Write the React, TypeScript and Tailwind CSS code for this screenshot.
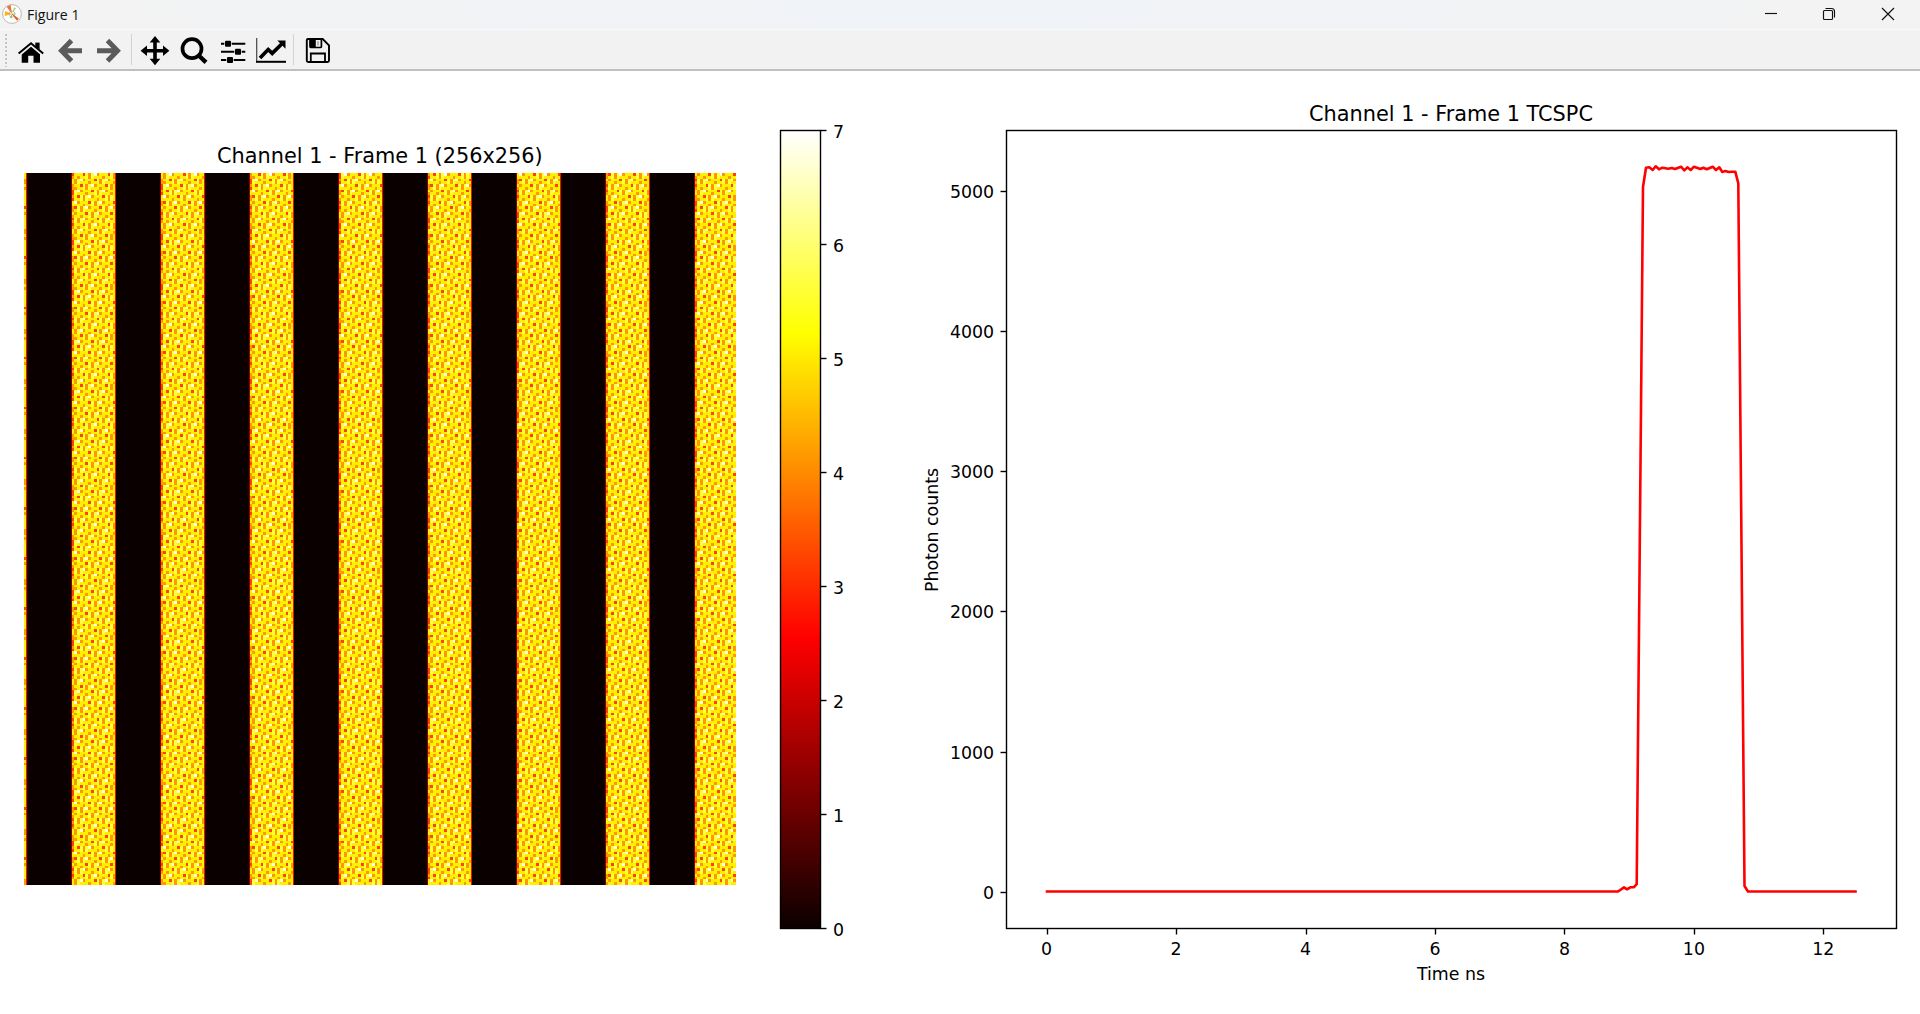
import type { ReactNode } from "react";

const CELL = 712 / 256;
const COLORS: Record<string, string> = {
  "1": "#8a0000",
  "2": "#f01000",
  "3": "#ff4200",
  "4": "#ff9800",
  "5": "#fff000",
  "6": "#ffff3c",
  "7": "#ffffe4",
};
// Photon counts repeat along a slanted lattice of 18 cells.
const CYCLE = "354566554454665575";

function buildHeatmap() {
  const paths: Record<string, string> = {};
  for (let x = 0; x < 256; x++) {
    const inner = (x + 31) % 32;
    if (inner < 16) continue;
    for (let y = 0; y < 256; y++) {
      let v = CYCLE[(4 * x + y + 6) % 18];
      if (inner === 16) v = v < "5" ? "3" : v > "5" ? "5" : "4";
      if (inner === 31 && v > "5") v = "5";
      paths[v] = (paths[v] || "") + `M${x} ${y}h1v1h-1z`;
    }
    if (inner === 31) paths["2"] = (paths["2"] || "") + `M${x + 0.74} 0h.36v256h-.36z`;
    if (inner === 16) paths["1"] = (paths["1"] || "") + `M${x - 0.1} 0h.36v256h-.36z`;
  }
  return paths;
}

const HEATMAP = buildHeatmap();

const PLATEAU: [number, number][] = [
  [159, 200], [168, 143], [178, 142], [188, 150], [197, 139], [207, 148], [217, 143], [235, 146],
  [245, 144], [255, 147], [273, 140], [283, 151], [292, 142], [302, 150], [312, 140], [331, 147],
  [340, 143], [350, 148], [368, 140], [378, 150], [388, 142], [397, 156], [406, 153], [416, 156],
  [426, 155], [436, 155], [445, 190],
];
const CURVE =
  "1047,891.5 1618,891.5 1624,887.4 1627,889.3 1630.3,887.3 1633.7,887.3 1636.7,884.2 " +
  PLATEAU.map(([x, y]) => `${(1590 + x / 3).toFixed(1)},${(120 + y / 3).toFixed(1)}`).join(" ") +
  " 1744.5,886 1748,891.5 1855.5,891.5";

function Tool({ x, w, label, children }: { x: number; w: number; label: string; children: ReactNode }) {
  return (
    <button aria-label={label} className="block h-[39px] shrink-0">
      <svg width={w} height={39} viewBox={`${x} 30 ${w} 39`} className="block">
        {children}
      </svg>
    </button>
  );
}

function Toolbar() {
  return (
    <div className="flex h-[42px] items-start border-t border-[#fafafa] border-b-2 border-b-[#c0c0c0] bg-[#f2f2f2]">
      <Tool x={0} w={14} label="Handle">
        <path d="M6 34V67" stroke="#bdbdbd" strokeWidth="1.7" strokeDasharray="2 2" />
      </Tool>
      <Tool x={14} w={38} label="Home">
        <path d="M31 45.8 40 53.2V62.7H33.5V55.8H28.2V62.7H21.7V53.2Z" />
        <path d="M35.3 42.6H39.6V50H35.3Z" />
        <path d="M31 44.9 42 54.2M31 44.9 20 54.2" fill="none" stroke="#f2f2f2" strokeWidth="2.6" />
        <path d="M18.6 53.6 31 43.2 43.2 53.6" fill="none" stroke="black" strokeWidth="2" />
      </Tool>
      <Tool x={52} w={38} label="Back">
        <path d="M71.5 40.5 61.5 50.7 71.5 61M62 50.7H82" fill="none" stroke="#5b5b5b" strokeWidth="4.9" />
      </Tool>
      <Tool x={90} w={41} label="Forward">
        <path d="M107.5 40.5 117.5 50.7 107.5 61M117 50.7H97" fill="none" stroke="#5b5b5b" strokeWidth="4.9" />
      </Tool>
      <div className="mt-1 h-[31px] w-px bg-[#d2d2d2]" />
      <Tool x={132} w={43} label="Pan">
        <path d="M155 39V62M143 50.8H167" stroke="black" strokeWidth="3.6" />
        <path d="M155 36 160.3 42.5H149.7ZM155 65.2 160.3 58.7H149.7ZM140.6 50.8 147 45.5V56.1ZM169.4 50.8 163 45.5V56.1Z" />
      </Tool>
      <Tool x={175} w={39} label="Zoom">
        <circle cx="192" cy="48.7" r="9.5" fill="none" stroke="black" strokeWidth="3.7" />
        <path d="M199 55.8 206 62.4" stroke="black" strokeWidth="4.3" />
      </Tool>
      <Tool x={214} w={37} label="Subplots">
        <path d="M221 43.7H245.3M221 51.8H245.3M221 59.9H245.3" stroke="black" strokeWidth="2" />
        <path d="M224.3 43.7H231.7M234.3 51.8H241.7M226.3 59.9H233.7" stroke="#f2f2f2" strokeWidth="3" />
        <rect x="225" y="40.7" width="6" height="6" rx="1" />
        <rect x="235" y="48.8" width="6" height="6" rx="1" />
        <rect x="227" y="56.9" width="6" height="6" rx="1" />
      </Tool>
      <Tool x={251} w={42} label="Edit axes">
        <path d="M256.7 38V62" stroke="#444" strokeWidth="1.2" />
        <path d="M256 61.8H286" stroke="black" strokeWidth="2" />
        <path d="M260 58 268.2 49.5 272.2 53.4 281.7 44" fill="none" stroke="black" strokeWidth="3.7" />
        <path d="M277.3 40.5H285.5V48.7L282.8 46 279.8 43Z" />
      </Tool>
      <div className="mt-1 h-[31px] w-px bg-[#d2d2d2]" />
      <Tool x={294} w={48} label="Save">
        <path d="M308 39H322.7L329 45.3V60.5Q329 62 327.5 62H308.2Q306.8 62 306.8 60.5V40.2Q306.8 39 308 39Z" fill="none" stroke="black" strokeWidth="1.9" />
        <path d="M310 39V46.4Q310 47.5 311.2 47.5H320.2Q321.4 47.5 321.4 46.4V39" fill="none" stroke="black" strokeWidth="1.7" />
        <path d="M310 39H315.8V47.5H310Z" />
        <path d="M318 41.2V45.5" stroke="#777" strokeWidth="1" />
        <path d="M310.8 62V53.5H325V62" fill="none" stroke="black" strokeWidth="1.8" />
      </Tool>
    </div>
  );
}

export default function App() {
  return (
    <div className="flex h-[1014px] w-[1920px] flex-col overflow-hidden bg-white">
      <header className="flex h-[29px] items-center justify-between bg-gradient-to-r from-[#f3f3f3] via-[#f0f3f8] to-[#f3f3f3]">
        <div className="flex items-center">
          <svg width="27" height="29" viewBox="0 0 27 29">
            <circle cx="12" cy="14" r="9.4" fill="white" stroke="#b9b9b9" strokeWidth="1" />
            <path d="M12 14 6.6 6.8 10.6 4.8Z" fill="#f46d43" />
            <path d="M12 14 4.6 16 5.1 11Z" fill="#fdb515" />
            <path d="M12 14 16 8.2 14 7.2Z" fill="#a6d96a" />
            <path d="M12 14 9.8 18 12 18.3Z" fill="#8cc665" />
            <path d="M12 14 18.4 18.8 17 20.2Z" fill="#ea5b16" stroke="#ea5b16" strokeWidth=".8" />
            <path d="M12 14 15.5 13 15 15Z" fill="#b7d94c" />
            <circle cx="12" cy="14" r="3" fill="none" stroke="#99a" strokeWidth=".5" />
          </svg>
          <svg width="70" height="29" viewBox="0 0 70 29">
            <text x="0" y="19.7" fontSize="14.7" textLength="52.5" lengthAdjust="spacingAndGlyphs" fill="#111" className="font-['Open_Sans',sans-serif]">Figure 1</text>
          </svg>
        </div>
        <div className="flex">
          {["M1765 13.5H1777", "M1823.5 11.5Q1823.5 10.5 1824.5 10.5H1831.5Q1832.5 10.5 1832.5 11.5V18.5Q1832.5 19.5 1831.5 19.5H1824.5Q1823.5 19.5 1823.5 18.5ZM1825.5 8.5H1831.5Q1834.5 8.5 1834.5 11.5V17.5", "M1882 8 1894 20M1894 8 1882 20"].map((d, i) => (
            <button key={d} aria-label={["Minimize", "Restore", "Close"][i]}>
              <svg width="58" height="29" viewBox={`${1746 + i * 58} 0 58 29`} className="block">
                <path d={d} fill="none" stroke="#111" strokeWidth="1.15" />
              </svg>
            </button>
          ))}
        </div>
      </header>
      <Toolbar />
      <main className="flex h-[943px] font-['DejaVu_Sans',sans-serif]">
        <svg width="900" height="943" viewBox="0 71 900 943" fontSize="17.36">
          <defs>
            <linearGradient id="hot" x1="0" y1="1" x2="0" y2="0">
              <stop offset="0" stopColor="#0b0000" />
              <stop offset=".365" stopColor="#ff0000" />
              <stop offset=".746" stopColor="#ffff00" />
              <stop offset="1" stopColor="#ffffff" />
            </linearGradient>
          </defs>
          <text x="379.9" y="163" fontSize="20.83" textAnchor="middle">Channel 1 - Frame 1 (256x256)</text>
          <g transform={`translate(24.2 173) scale(${CELL})`} shapeRendering="crispEdges">
            <rect width="256" height="256" fill="#0b0000" />
            {Object.keys(HEATMAP).sort().reverse().map((v) => (
              <path key={v} d={HEATMAP[v]} fill={COLORS[v]} />
            ))}
          </g>
          <rect x="780.5" y="130.5" width="40" height="798" fill="url(#hot)" stroke="black" strokeWidth="1.4" />
          {[0, 1, 2, 3, 4, 5, 6, 7].map((v) => (
            <g key={v}>
              <path d={`M820.5 ${Math.round(928 - v * 114) + 0.5}h6`} stroke="black" strokeWidth="1.4" />
              <text x="833" y={935.5 - v * 114}>{v}</text>
            </g>
          ))}
        </svg>
        <svg width="1020" height="943" viewBox="900 71 1020 943" fontSize="17.36">
          <text x="1451" y="121" fontSize="20.83" textAnchor="middle">Channel 1 - Frame 1 TCSPC</text>
          <rect x="1006.5" y="130.5" width="890" height="798" fill="none" stroke="black" strokeWidth="1.4" />
          {[0, 2, 4, 6, 8, 10, 12].map((v) => (
            <g key={v}>
              <path d={`M${Math.round(1046.8 + v * 64.7) + 0.5} 928.5v6`} stroke="black" strokeWidth="1.4" />
              <text x={1046.5 + v * 64.74} y="955" textAnchor="middle">{v}</text>
            </g>
          ))}
          {[0, 1000, 2000, 3000, 4000, 5000].map((v) => (
            <g key={v}>
              <path d={`M1006.5 ${Math.round(891.6 - v * 0.1401) + 0.5}h-6`} stroke="black" strokeWidth="1.4" />
              <text x="994.1" y={898.6 - v * 0.1401} textAnchor="end">{v}</text>
            </g>
          ))}
          <text x="1451" y="980" textAnchor="middle">Time ns</text>
          <text transform="translate(938 530) rotate(-90)" textAnchor="middle">Photon counts</text>
          <polyline points={CURVE} fill="none" stroke="red" strokeWidth="2.6" strokeLinejoin="round" strokeLinecap="square" />
        </svg>
      </main>
    </div>
  );
}
